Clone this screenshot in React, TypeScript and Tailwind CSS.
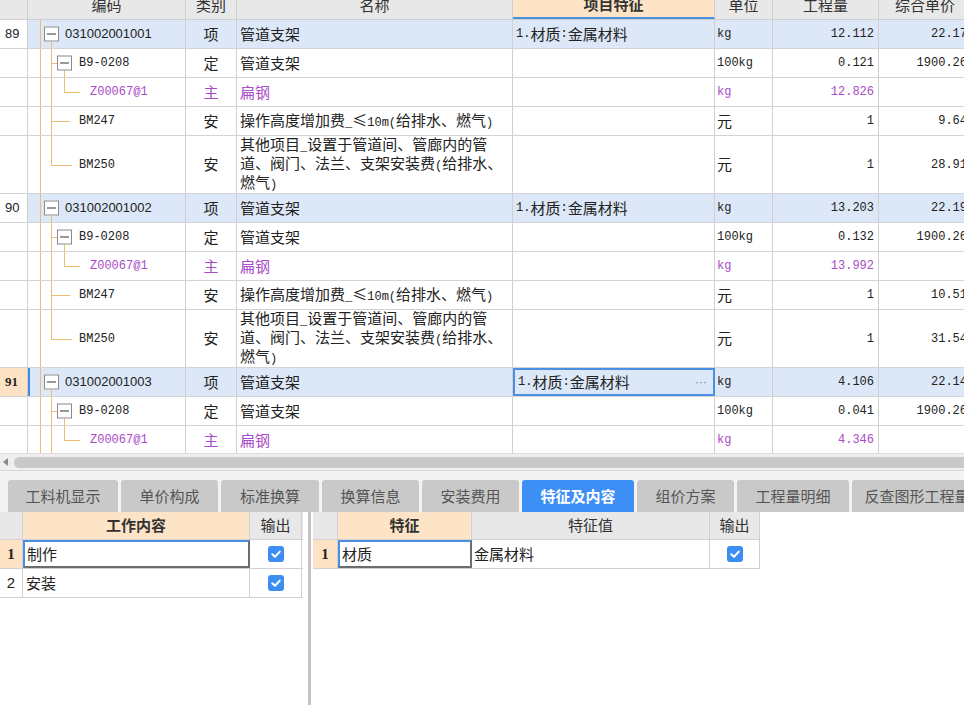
import React from 'react';

type Level = 'xiang' | 'ding' | 'zhu' | 'an' | 'anLast';
interface Row {
  no?: string;
  level: Level;
  code: string;
  cat: string;
  name: string[];
  feat?: string;
  unit: string;
  qty: string;
  price: string;
  tall?: boolean;
  sel?: boolean;
}

const ASCII = /[\x20-\x7E]/;
function Mix({ text }: { text: string }) {
  const parts = text.split(/([\x20-\x7E]+)/).filter(Boolean);
  return (
    <>
      {parts.map((p, i) =>
        ASCII.test(p[0]) ? (
          <span key={i} className="font-['Liberation_Mono',monospace] text-[12px]">
            {p}
          </span>
        ) : (
          <span key={i}>{p}</span>
        )
      )}
    </>
  );
}

function group(no: string, code: string, qty: string, price: string, q2: string, q3: string, p4: string, p5: string, sel?: boolean): Row[] {
  return [
    { no, level: 'xiang', code, cat: '项', name: ['管道支架'], feat: '1.材质:金属材料', unit: 'kg', qty, price, sel },
    { level: 'ding', code: 'B9-0208', cat: '定', name: ['管道支架'], unit: '100kg', qty: q2, price: '1900.26' },
    { level: 'zhu', code: 'Z00067@1', cat: '主', name: ['扁钢'], unit: 'kg', qty: q3, price: '' },
    { level: 'an', code: 'BM247', cat: '安', name: ['操作高度增加费_≤10m(给排水、燃气)'], unit: '元', qty: '1', price: p4 },
    {
      level: 'anLast',
      code: 'BM250',
      cat: '安',
      name: ['其他项目_设置于管道间、管廊内的管', '道、阀门、法兰、支架安装费(给排水、', '燃气)'],
      unit: '元',
      qty: '1',
      price: p5,
      tall: true,
    },
  ];
}

const rows: Row[] = [
  ...group('89', '031002001001', '12.112', '22.17', '0.121', '12.826', '9.64', '28.91'),
  ...group('90', '031002001002', '13.203', '22.19', '0.132', '13.992', '10.51', '31.54'),
  ...group('91', '031002001003', '4.106', '22.14', '0.041', '4.346', '', '', true).slice(0, 3),
];

const L = 'absolute bg-[#efbc74]';

function Box({ className }: { className: string }) {
  return (
    <div
      className={
        'absolute top-1/2 -translate-y-1/2 w-[15px] h-[15px] border border-[#8a8a8a] bg-white flex items-center justify-center ' +
        className
      }
    >
      <div className="w-[9px] h-px bg-[#333]" />
    </div>
  );
}

function TreeCell({ r }: { r: Row }) {
  const lv = r.level;
  return (
    <div className="relative w-[158px] shrink-0 border-r border-[#d0d0d0] flex items-center overflow-hidden">
      {r.sel && <div className="absolute left-0 top-0 bottom-0 w-[2px] bg-[#3c8ce6]" />}
      <div className={L + ' left-[12px] top-0 bottom-0 w-px'} />
      {lv === 'xiang' && (
        <>
          <div className={L + ' left-[23px] top-[calc(50%+7px)] bottom-0 w-px'} />
          <Box className="left-[16px]" />
          <span className="pl-[37px] font-['Liberation_Sans',sans-serif] text-[13px] text-[#222]">{r.code}</span>
        </>
      )}
      {lv === 'ding' && (
        <>
          <div className={L + ' left-[23px] top-0 bottom-0 w-px'} />
          <div className={L + ' left-[23px] top-1/2 w-[6px] h-px'} />
          <div className={L + ' left-[36px] top-[calc(50%+7px)] bottom-0 w-px'} />
          <Box className="left-[29px]" />
          <span className="pl-[51px] font-['Liberation_Mono',monospace] text-[12px] text-[#222]">{r.code}</span>
        </>
      )}
      {lv === 'zhu' && (
        <>
          <div className={L + ' left-[23px] top-0 bottom-0 w-px'} />
          <div className={L + ' left-[36px] top-0 h-1/2 w-px'} />
          <div className={L + ' left-[36px] top-1/2 w-[16px] h-px'} />
          <span className="pl-[62px] font-['Liberation_Mono',monospace] text-[12px] text-[#a94bc8]">{r.code}</span>
        </>
      )}
      {lv === 'an' && (
        <>
          <div className={L + ' left-[23px] top-0 bottom-0 w-px'} />
          <div className={L + ' left-[23px] top-1/2 w-[19px] h-px'} />
          <span className="pl-[51px] font-['Liberation_Mono',monospace] text-[12px] text-[#222]">{r.code}</span>
        </>
      )}
      {lv === 'anLast' && (
        <>
          <div className={L + ' left-[23px] top-0 h-1/2 w-px'} />
          <div className={L + ' left-[23px] top-1/2 w-[21px] h-px'} />
          <span className="pl-[51px] font-['Liberation_Mono',monospace] text-[12px] text-[#222]">{r.code}</span>
        </>
      )}
    </div>
  );
}

function DataRow({ r }: { r: Row }) {
  const blue = r.level === 'xiang';
  const purple = r.level === 'zhu';
  const tc = purple ? 'text-[#a94bc8]' : 'text-[#222]';
  return (
    <div
      className={
        (r.tall ? 'h-[58px]' : 'h-[29px]') +
        ' flex border-b border-[#d4d4d4] ' +
        (blue ? 'bg-[#dce8f8]' : 'bg-white')
      }
    >
      <div
        className={
          'w-[28px] shrink-0 border-r border-[#d0d0d0] flex items-center pl-[5px] text-[13px] text-[#222] ' +
          (r.sel ? "bg-[#fde3c3] font-['Liberation_Serif',serif] font-bold" : "bg-white font-['Liberation_Sans',sans-serif]")
        }
      >
        {r.no}
      </div>
      <TreeCell r={r} />
      <div className={'w-[51px] shrink-0 border-r border-[#d0d0d0] flex items-center justify-center text-[15px] ' + tc}>{r.cat}</div>
      <div className={'w-[276px] shrink-0 border-r border-[#d0d0d0] flex items-center pl-[3px] text-[15px] ' + tc}>
        <div className="leading-[16px]">
          {r.name.map((n, i) => (
            <div key={i}>
              <Mix text={n} />
            </div>
          ))}
        </div>
      </div>
      <div
        className={
          'w-[202px] shrink-0 flex items-center pl-[3px] text-[15px] text-[#222] ' +
          (r.sel ? 'border-2 border-[#4a90e2] pl-[2px]' : 'border-r border-[#d0d0d0]')
        }
      >
        {r.feat && <Mix text={r.feat} />}
        {r.sel && <span className="ml-auto mr-[6px] text-[#6b87b5] text-[12px] font-['Liberation_Sans',sans-serif]">···</span>}
      </div>
      <div className={"w-[58px] shrink-0 border-r border-[#d0d0d0] flex items-center pl-[2px] text-[15px] " + tc}>
        <Mix text={r.unit} />
      </div>
      <div className={"w-[106px] shrink-0 border-r border-[#d0d0d0] flex items-center justify-end pr-[4px] font-['Liberation_Mono',monospace] text-[12px] " + tc}>
        {r.qty}
      </div>
      <div className="w-[93px] shrink-0 border-r border-[#d0d0d0] flex items-center justify-end pr-[4px] font-['Liberation_Mono',monospace] text-[12px] text-[#222]">
        {r.price}
      </div>
    </div>
  );
}

function Header() {
  const c = 'shrink-0 border-r border-[#cfcfcf] flex items-center justify-center text-[15px] text-[#333]';
  return (
    <div className="h-[28px] flex bg-[#e8e8e8] border-b border-[#cfcfcf] -mt-[8px]">
      <div className={c + ' w-[28px]'} />
      <div className={c + ' w-[158px]'}>编码</div>
      <div className={c + ' w-[51px]'}>类别</div>
      <div className={c + ' w-[276px]'}>名称</div>
      <div className={c + ' w-[202px] bg-[#fde4c6] font-bold border-b-2 border-b-[#4a90e2]'}>项目特征</div>
      <div className={c + ' w-[58px]'}>单位</div>
      <div className={c + ' w-[106px]'}>工程量</div>
      <div className={c + ' w-[93px]'}>综合单价</div>
    </div>
  );
}

function Check() {
  return (
    <div className="w-[16px] h-[16px] rounded-[3px] bg-[#3d8ef2] flex items-center justify-center">
      <svg width="12" height="12" viewBox="0 0 12 12">
        <path d="M2.3 6.3 L5 8.8 L9.8 3.6" stroke="white" strokeWidth="2" fill="none" strokeLinecap="round" strokeLinejoin="round" />
      </svg>
    </div>
  );
}

const tabs: { label: string; w: string; active?: boolean }[] = [
  { label: '工料机显示', w: 'w-[110px]' },
  { label: '单价构成', w: 'w-[97px]' },
  { label: '标准换算', w: 'w-[98px]' },
  { label: '换算信息', w: 'w-[97px]' },
  { label: '安装费用', w: 'w-[97px]' },
  { label: '特征及内容', w: 'w-[112px]', active: true },
  { label: '组价方案', w: 'w-[97px]' },
  { label: '工程量明细', w: 'w-[112px]' },
  { label: '反查图形工程量', w: 'w-[130px]' },
];

function FocusCell({ w, children }: { w: string; children: React.ReactNode }) {
  return (
    <div
      className={
        w +
        ' shrink-0 flex items-center pl-[2px] border-2 border-t-[#4a8fe0] border-l-[#4a8fe0] border-r-[#6d6d6d] border-b-[#6d6d6d] text-[15px] text-[#222] bg-white'
      }
    >
      {children}
    </div>
  );
}

export default function App() {
  const hc = 'shrink-0 border-r border-[#d0d0d0] flex items-center justify-center text-[15px] text-[#333]';
  const bc = 'shrink-0 border-r border-[#d0d0d0] flex items-center text-[15px] text-[#222]';
  return (
    <div className="w-[964px] h-[705px] overflow-hidden bg-white flex flex-col font-['Noto_Sans_CJK_SC',sans-serif]">
      <div className="h-[453px] shrink-0 overflow-hidden">
        <div className="w-[980px]">
          <Header />
          {rows.map((r, i) => (
            <DataRow key={i} r={r} />
          ))}
        </div>
      </div>

      {/* horizontal scrollbar */}
      <div className="h-[17px] shrink-0 bg-[#efefef] flex items-center border-t border-[#dedede]">
        <div className="ml-[3px] w-0 h-0 border-y-[4px] border-y-transparent border-r-[5px] border-r-[#8a8a8a]" />
        <div className="ml-[6px] flex-1 h-[11px] rounded-full bg-[#c9c9c9] mr-[-10px]" />
      </div>

      {/* tabs */}
      <div className="h-[42px] shrink-0 bg-[#f3f3f3] border-t border-[#d8d8d8] flex items-end pl-[8px] gap-[3px]">
        {tabs.map((t) => (
          <div
            key={t.label}
            className={
              t.w +
              ' h-[32px] shrink-0 rounded-t-[3px] flex items-center justify-center text-[15px] ' +
              (t.active ? 'bg-[#3d8ef5] text-white font-bold' : 'bg-[#c9c9c9] text-[#555]')
            }
          >
            {t.label}
          </div>
        ))}
      </div>

      {/* bottom panels */}
      <div className="flex-1 flex bg-white">
        <div className="w-[303px] shrink-0">
          <div className="h-[28px] flex bg-[#e8e8e8] border-b border-[#d0d0d0]">
            <div className={hc + ' w-[23px]'} />
            <div className={hc + ' w-[227px] bg-[#fde4c6] font-bold text-[#222]'}>工作内容</div>
            <div className={hc + ' w-[52px]'}>输出</div>
          </div>
          <div className="h-[29px] flex border-b border-[#d0d0d0]">
            <div className={bc + " w-[23px] bg-[#fde3c3] justify-center font-['Liberation_Serif',serif] font-bold text-[13px]"}>1</div>
            <FocusCell w="w-[227px]">制作</FocusCell>
            <div className={bc + ' w-[52px] justify-center'}>
              <Check />
            </div>
          </div>
          <div className="h-[29px] flex border-b border-[#d0d0d0]">
            <div className={bc + " w-[23px] justify-center font-['Liberation_Sans',sans-serif] text-[13px]"}>2</div>
            <div className={bc + ' w-[227px] pl-[3px]'}>安装</div>
            <div className={bc + ' w-[52px] justify-center'}>
              <Check />
            </div>
          </div>
        </div>

        <div className="w-[5px] shrink-0" />
        <div className="w-[3px] shrink-0 bg-[#c4c4c4]" />
        <div className="w-[2px] shrink-0" />

        <div className="w-[447px] shrink-0">
          <div className="h-[28px] flex bg-[#e8e8e8] border-b border-[#d0d0d0]">
            <div className={hc + ' w-[25px]'} />
            <div className={hc + ' w-[134px] bg-[#fde4c6] font-bold text-[#222]'}>特征</div>
            <div className={hc + ' w-[238px]'}>特征值</div>
            <div className={hc + ' w-[50px]'}>输出</div>
          </div>
          <div className="h-[29px] flex border-b border-[#d0d0d0]">
            <div className={bc + " w-[25px] bg-[#fde3c3] justify-center font-['Liberation_Serif',serif] font-bold text-[13px]"}>1</div>
            <FocusCell w="w-[134px]">材质</FocusCell>
            <div className={bc + ' w-[238px] pl-[2px]'}>金属材料</div>
            <div className={bc + ' w-[50px] justify-center'}>
              <Check />
            </div>
          </div>
        </div>
      </div>
    </div>
  );
}
